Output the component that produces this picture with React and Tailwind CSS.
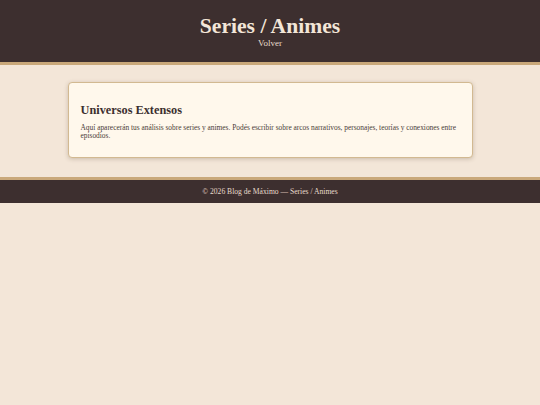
import React from "react";

export default function App() {
  const serif = { fontFamily: '"Liberation Serif", Georgia, serif' };
  return (
    <div className="min-h-[405px] bg-[#f3e6d8] text-[#3b2f2f]" style={serif}>
      <header className="bg-[#3d2f2f] border-b-[3px] border-[#c9a87a] h-[65px] flex flex-col items-center pt-[14px]">
        <h1 className="text-[21.6px] font-bold leading-[24px] text-[#f3e6d8]">Series / Animes</h1>
        <a href="#" className="text-[9px] leading-[10px] text-[#e8dccd]">Volver</a>
      </header>

      <main className="w-[405px] mx-auto pt-[17px] pb-[19px]">
        <div className="bg-[#fff8ec] border border-[#d2b991] rounded-[4px] shadow-[0_1px_4px_rgba(80,60,30,0.25)] px-[12px] pt-[20px] pb-[17px]">
          <h2 className="text-[12.3px] font-bold leading-[14px] text-[#3b2f2f]">Universos Extensos</h2>
          <p className="mt-[7px] text-[7.4px] leading-[8px] text-[#4a3c38]">
            Aquí aparecerán tus análisis sobre series y animes. Podés escribir sobre arcos narrativos, personajes, teorías y conexiones entre episodios.
          </p>
        </div>
      </main>

      <footer className="bg-[#3d2f2f] border-t-[3px] border-[#c9a87a] h-[26px] flex items-center justify-center">
        <p className="text-[7.6px] text-[#e8dccd]">© 2026 Blog de Máximo — Series / Animes</p>
      </footer>
    </div>
  );
}
